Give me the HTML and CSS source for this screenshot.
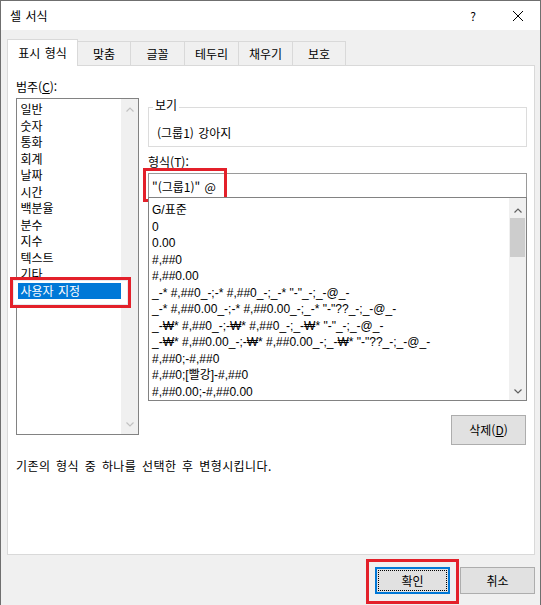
FILE: index.html
```html
<!DOCTYPE html>
<html lang="ko">
<head>
<meta charset="utf-8">
<title>셀 서식</title>
<link rel="stylesheet" href="styles.css">
</head>
<body>
<div class="window">
  <div class="titlebar">
    <span class="title">셀 서식</span>
    <span class="help">?</span>
    <span class="close"><svg width="10" height="10" viewBox="0 0 10 10"><path d="M0 0L10 10M10 0L0 10" stroke="#000" stroke-width="1"/></svg></span>
  </div>
  <div class="body">
    <div class="tabs">
      <div class="tab active w1">표시 형식</div>
      <div class="tab w2">맞춤</div>
      <div class="tab w3">글꼴</div>
      <div class="tab w3">테두리</div>
      <div class="tab w3">채우기</div>
      <div class="tab w2">보호</div>
    </div>
    <div class="panel">
      <div class="cols">
        <div class="left">
          <div class="label">범주(<u>C</u>):</div>
          <div class="listbox cat">
            <ul class="items">
              <li>일반</li>
              <li>숫자</li>
              <li>통화</li>
              <li>회계</li>
              <li>날짜</li>
              <li>시간</li>
              <li>백분율</li>
              <li>분수</li>
              <li>지수</li>
              <li>텍스트</li>
              <li>기타</li>
              <li class="sel">사용자 지정</li>
            </ul>
            <div class="vscroll off">
              <span class="arrow up"><svg width="8" height="5" viewBox="0 0 8 5"><path d="M0.5 4.5L4 1L7.5 4.5" fill="none" stroke="currentColor" stroke-width="1.2"/></svg></span>
              <span class="track"></span>
              <span class="arrow down"><svg width="8" height="5" viewBox="0 0 8 5"><path d="M0.5 0.5L4 4L7.5 0.5" fill="none" stroke="currentColor" stroke-width="1.2"/></svg></span>
            </div>
            <div class="mark mark-cat"></div>
          </div>
        </div>
        <div class="right">
          <div class="group">
            <span class="legend">보기</span>
            <div class="preview">(그룹1) 강아지</div>
          </div>
          <div class="label fmt-label">형식(<u>T</u>):</div>
          <div class="input">"(그룹1)" @<div class="mark mark-input"></div></div>
          <div class="listbox fmt">
            <ul class="items">
              <li>G/표준</li>
              <li>0</li>
              <li>0.00</li>
              <li>#,##0</li>
              <li>#,##0.00</li>
              <li>_-* #,##0_-;-* #,##0_-;_-* "-"_-;_-@_-</li>
              <li>_-* #,##0.00_-;-* #,##0.00_-;_-* "-"??_-;_-@_-</li>
              <li>_-₩* #,##0_-;-₩* #,##0_-;_-₩* "-"_-;_-@_-</li>
              <li>_-₩* #,##0.00_-;-₩* #,##0.00_-;_-₩* "-"??_-;_-@_-</li>
              <li>#,##0;-#,##0</li>
              <li>#,##0;[빨강]-#,##0</li>
              <li>#,##0.00;-#,##0.00</li>
            </ul>
            <div class="vscroll on">
              <span class="arrow up"><svg width="8" height="5" viewBox="0 0 8 5"><path d="M0.5 4.5L4 1L7.5 4.5" fill="none" stroke="currentColor" stroke-width="1.2"/></svg></span>
              <span class="thumb"></span>
              <span class="track"></span>
              <span class="arrow down"><svg width="8" height="5" viewBox="0 0 8 5"><path d="M0.5 0.5L4 4L7.5 0.5" fill="none" stroke="currentColor" stroke-width="1.2"/></svg></span>
            </div>
          </div>
          <div class="btn-row"><button class="btn del">삭제(<u>D</u>)</button></div>
        </div>
      </div>
      <div class="hint">기존의 형식 중 하나를 선택한 후 변형시킵니다.</div>
    </div>
    <div class="footer">
      <div class="ok-wrap">
        <button class="btn ok"><span class="focus">확인</span></button>
        <div class="mark mark-ok"></div>
      </div>
      <button class="btn">취소</button>
    </div>
  </div>
</div>
</body>
</html>
```
FILE: styles.css
```css
* { box-sizing: border-box; margin: 0; padding: 0; }
html, body { width: 541px; height: 605px; overflow: hidden; background: #f0f0f0; }
body {
  font-family: "Noto Sans CJK KR", "Noto Sans", sans-serif;
  font-size: 12px;
  color: #000;
  word-spacing: 1px;
}
.window {
  width: 541px;
  height: 605px;
  border: 1px solid #6f6f6f;
  border-bottom: none;
  background: #f0f0f0;
  display: flex;
  flex-direction: column;
}
.titlebar {
  height: 29px;
  background: #fff;
  display: flex;
  align-items: center;
  padding-left: 9px;
  flex: none;
}
.title { flex: 1; line-height: 16px; }
.help { width: 46px; text-align: center; font-size: 12px; line-height: 16px; }
.close { width: 44px; display: flex; justify-content: center; align-items: center; }
.body {
  flex: 1;
  padding: 9px 5px 0 6px;
  display: flex;
  flex-direction: column;
}
.tabs {
  height: 26px;
  display: flex;
  align-items: flex-end;
  position: relative;
  z-index: 1;
}
.tab {
  height: 24px;
  border: 1px solid #d9d9d9;
  border-bottom: none;
  margin-left: -1px;
  background: #f0f0f0;
  display: flex;
  align-items: center;
  justify-content: center;
  line-height: 16px;
  padding-top: 1px;
}
.tab.w1 { width: 71px; }
.tab.w2 { width: 54px; }
.tab.w3 { width: 55px; }
.tab.active {
  margin-left: 0;
  height: 27px;
  margin-bottom: -1px;
  background: #fff;
  padding-top: 0;
}
.panel {
  height: 490px;
  border: 1px solid #d9d9d9;
  background: #fff;
  padding: 13px 7px 0 8px;
}
.cols { display: flex; }
.left { width: 132px; flex: none; }
.right { width: 379px; flex: none; }
.label { line-height: 16px; height: 16px; }
u { text-decoration: underline; text-underline-offset: 1px; }
.listbox {
  position: relative;
  border: 1px solid #828282;
  background: #fff;
  display: flex;
}
.listbox.cat { margin-top: 3px; width: 123px; height: 337px; }
.items { list-style: none; flex: 1; min-width: 0; line-height: 16.5px; white-space: nowrap; overflow: hidden; }
.cat .items { padding: 2px 0 0 1px; }
.cat li { padding-left: 2.5px; }
.cat li.sel { background: #0078d7; color: #fff; position: relative; z-index: 2; }
.vscroll {
  width: 17px;
  flex: none;
  background: #f0f0f0;
  display: flex;
  flex-direction: column;
}
.vscroll.off { color: #c2c2c2; }
.vscroll.on { color: #606060; }
.arrow { height: 20px; display: flex; justify-content: center; align-items: center; flex: none; }
.arrow svg { display: block; }
.fmt .arrow.up { padding-top: 4px; }
.fmt .arrow.down { padding-top: 2px; }
.track { flex: 1; }
.thumb { height: 39px; margin: 0 1px; background: #cdcdcd; flex: none; }
.mark { position: absolute; border: 3px solid #e3202a; }
.mark-cat {
  left: -7px; top: 178px; width: 121px; height: 31px;
  background: #fff;
  box-shadow: inset 0 0 0 1px #e6eaf0;
  z-index: 1;
}
.group {
  margin-top: 28px;
  height: 40px;
  border: 1px solid #dcdcdc;
}
.legend {
  display: block;
  width: fit-content;
  margin: -11px 0 0 4px;
  padding: 0 2px;
  background: #fff;
  line-height: 16px;
}
.preview { margin-top: 12px; padding-left: 8px; line-height: 16px; }
.fmt-label { margin-top: 7px; }
.input {
  position: relative;
  margin-top: 3px;
  height: 25px;
  border: 1px solid #9a9a9a;
  padding: 4px 0 0 3px;
  line-height: 17px;
  white-space: nowrap;
}
.mark-input { left: -6px; top: -6px; width: 84px; height: 34px; }
.listbox.fmt { margin-top: -1px; height: 204px; }
.fmt .items {
  padding: 4px 0 0 3px;
  font-family: "Liberation Sans", "Noto Sans CJK KR", sans-serif;
  word-spacing: 0;
}
.btn-row { display: flex; justify-content: flex-end; padding-right: 1px; margin-top: 14px; }
.btn {
  font-family: inherit;
  font-size: 12px;
  word-spacing: 1px;
  color: #000;
  width: 75px;
  height: 27px;
  background: #e1e1e1;
  border: 1px solid #adadad;
  display: flex;
  align-items: center;
  justify-content: center;
  line-height: 16px;
}
.btn.del { height: 30px; }
.hint { margin-top: 13px; line-height: 16px; letter-spacing: 0.4px; word-spacing: 2px; }
.footer {
  display: flex;
  justify-content: flex-end;
  gap: 10px;
  padding-top: 12px;
}
.ok-wrap { position: relative; }
.btn.ok { border: 2px solid #0078d7; padding: 1px; }
.focus {
  flex: 1;
  align-self: stretch;
  border: 1px dotted #000;
  display: flex;
  align-items: center;
  justify-content: center;
}
.mark-ok { left: -9px; top: -8px; width: 93px; height: 45px; }
```
